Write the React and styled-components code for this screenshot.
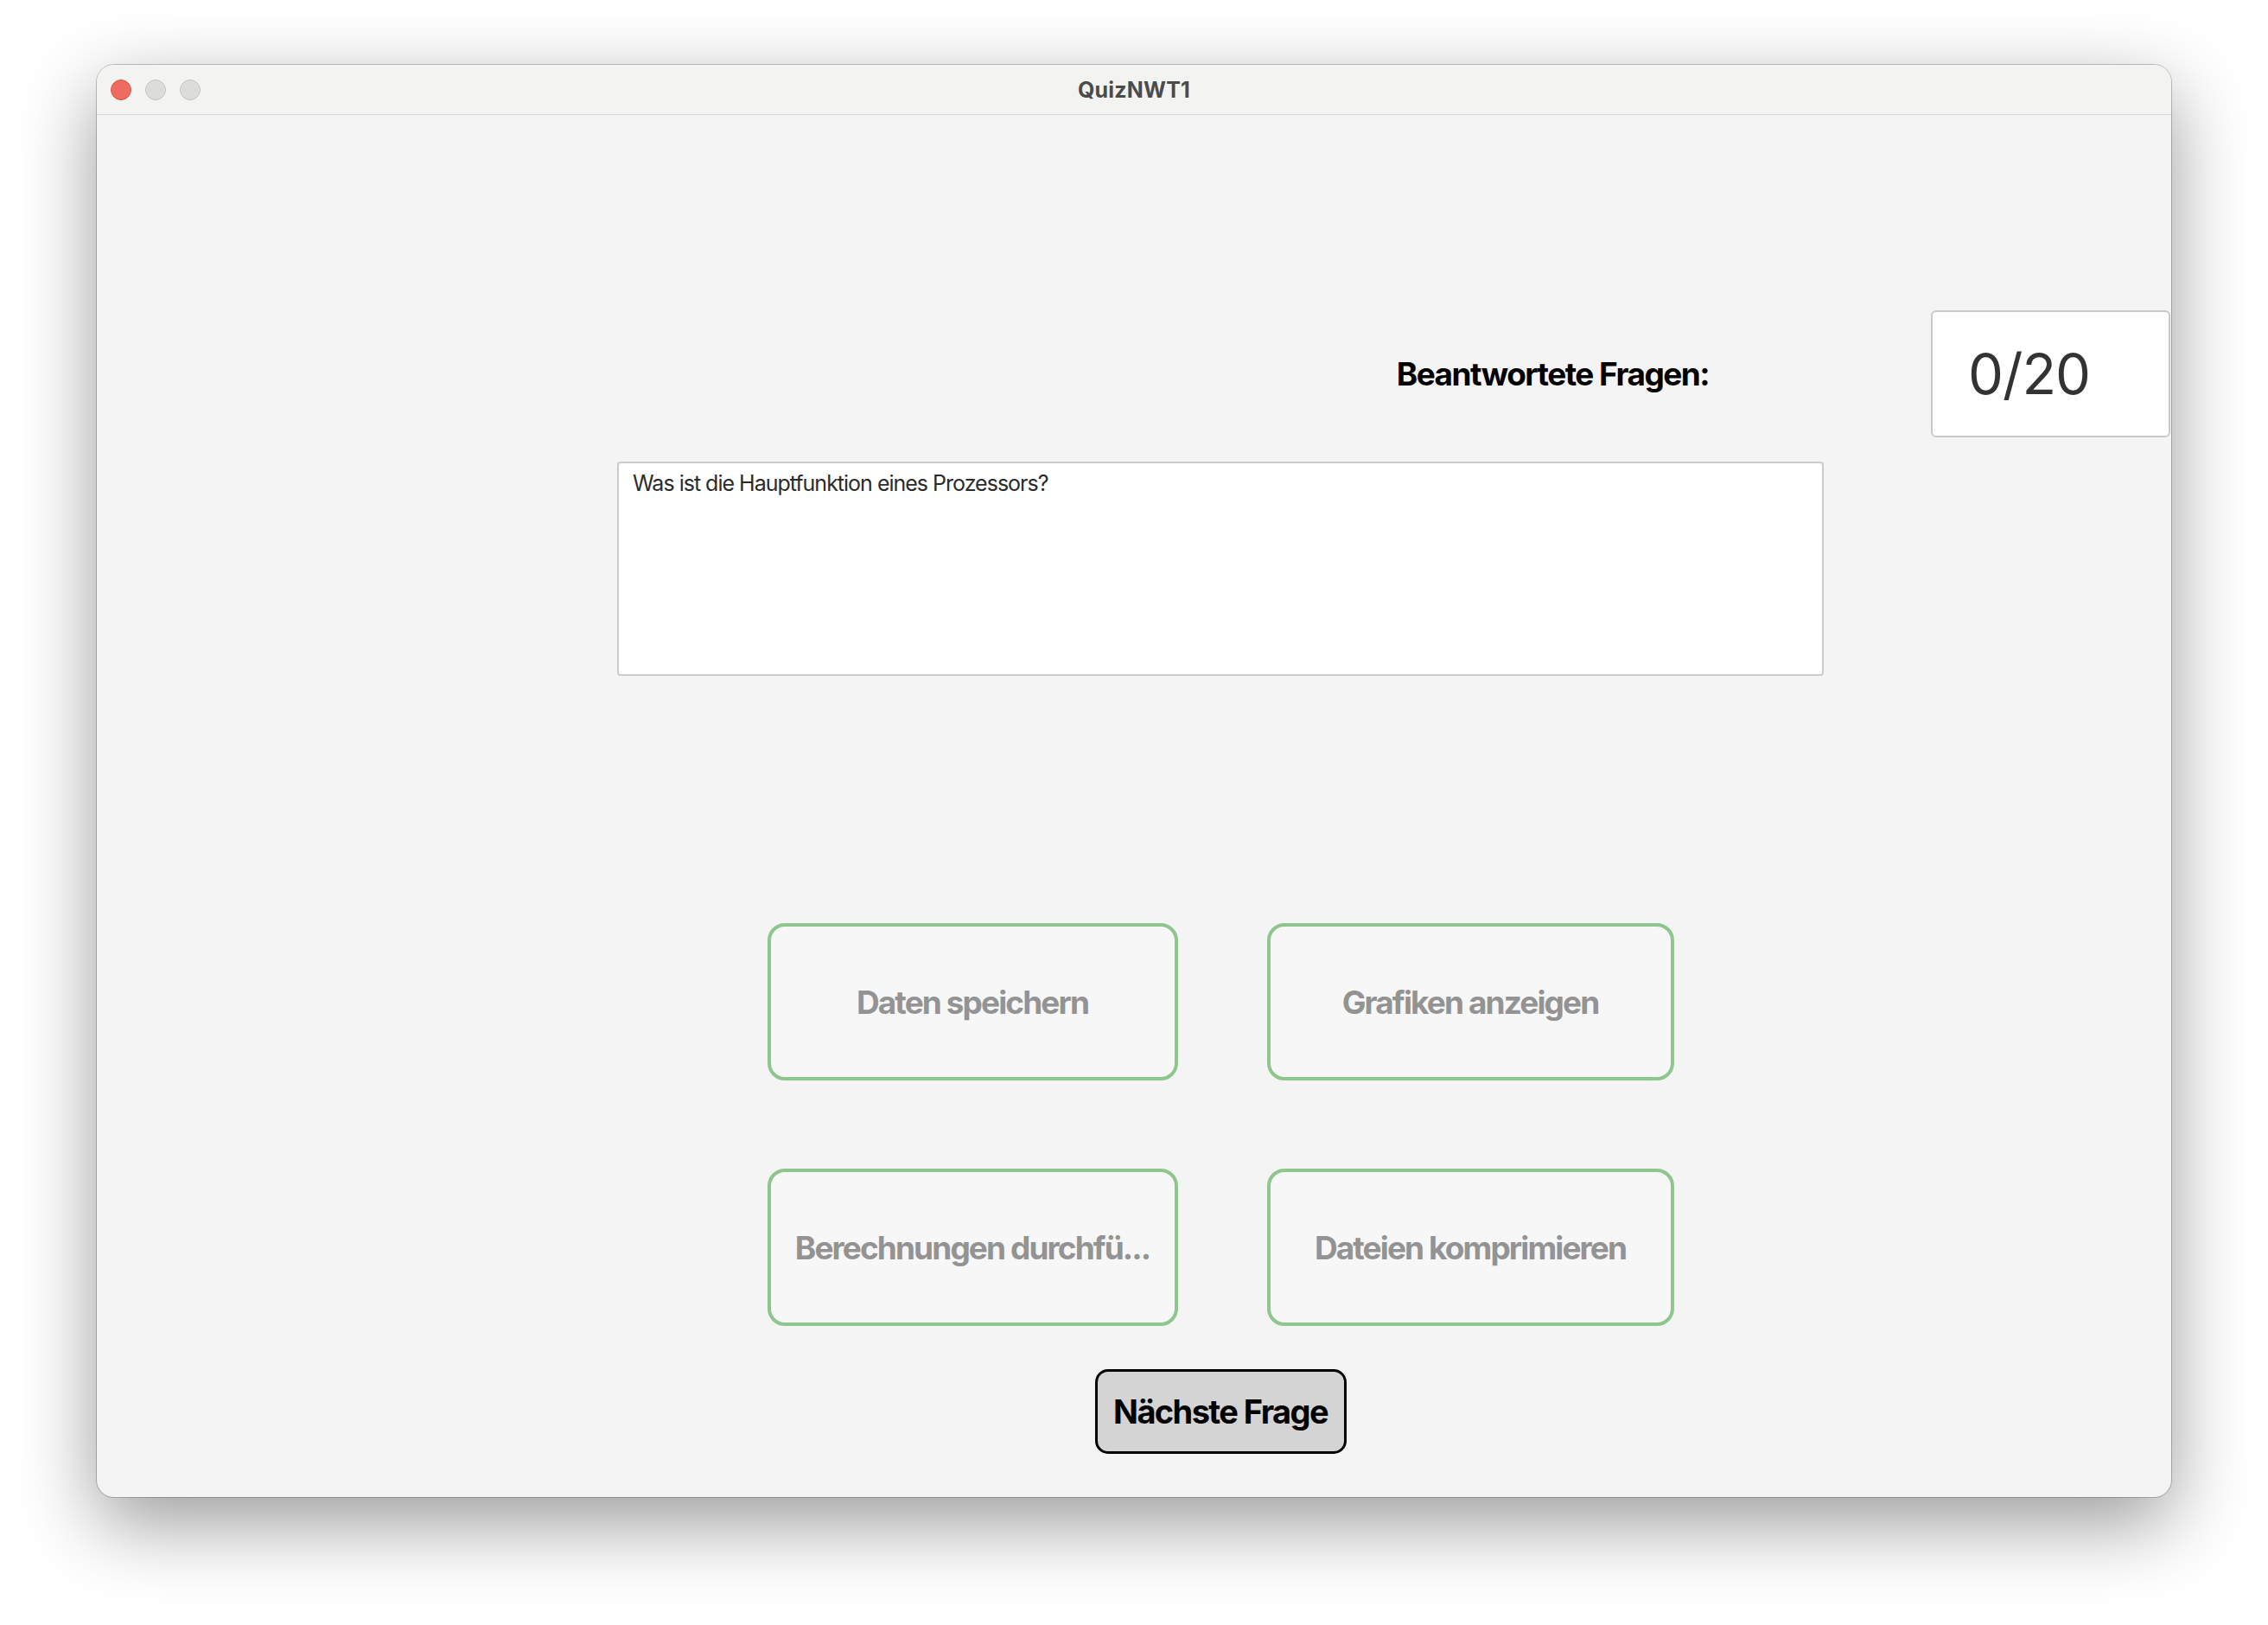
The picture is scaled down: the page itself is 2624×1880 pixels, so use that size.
import React from "react";
import styled, { createGlobalStyle } from "styled-components";

const GlobalStyle = createGlobalStyle`
  html, body {
    margin: 0;
    padding: 0;
    background: #ffffff;
  }
  body {
    font-family: Inter, "Noto Sans", "Liberation Sans", sans-serif;
  }
`;

const answers = [
  "Daten speichern",
  "Grafiken anzeigen",
  "Berechnungen durchfü...",
  "Dateien komprimieren",
];

const App = () => {
  return (
    <>
      <GlobalStyle />
      <Page>
        <Window>
          <TitleBar>
            <Lights>
              <Light $color="#ee6b60" $edge="#d5564b" />
              <Light $color="#dcdcdb" $edge="#c3c3c2" />
              <Light $color="#dcdcdb" $edge="#c3c3c2" />
            </Lights>
            <Title>QuizNWT1</Title>
            <span />
          </TitleBar>

          <Content>
            <HeaderRow>
              <CounterLabel>Beantwortete Fragen:</CounterLabel>
              <CounterBox>0/20</CounterBox>
            </HeaderRow>

            <Main>
              <Question readOnly defaultValue="Was ist die Hauptfunktion eines Prozessors?" />

              <AnswerGrid>
                {answers.map((a) => (
                  <AnswerButton key={a}>{a}</AnswerButton>
                ))}
              </AnswerGrid>

              <NextButton>Nächste Frage</NextButton>
            </Main>
          </Content>
        </Window>
      </Page>
    </>
  );
};

export default App;

/* Styled Components */
const Page = styled.div`
  padding: 75px 0 0 112px;
  min-height: 1880px;
  box-sizing: border-box;
`;

const Window = styled.div`
  width: 2400px;
  height: 1657px;
  border-radius: 20px;
  background: #f4f4f4;
  overflow: hidden;
  display: flex;
  flex-direction: column;
  box-shadow: 0 0 0 1px rgba(0, 0, 0, 0.22), 0 30px 90px rgba(0, 0, 0, 0.4);
`;

const TitleBar = styled.div`
  height: 57px;
  flex-shrink: 0;
  display: grid;
  grid-template-columns: 1fr auto 1fr;
  align-items: center;
  background: #f3f3f2;
  border-bottom: 1px solid #d5d5d4;
`;

const Lights = styled.div`
  display: flex;
  gap: 16px;
  padding-left: 16px;
`;

const Light = styled.span`
  width: 24px;
  height: 24px;
  border-radius: 50%;
  box-sizing: border-box;
  background: ${(p) => p.$color};
  border: 1px solid ${(p) => p.$edge};
`;

const Title = styled.div`
  font-family: Inter, "Liberation Sans", sans-serif;
  font-weight: 700;
  font-size: 25px;
  color: #4b4b4b;
  letter-spacing: 0.2px;
`;

const Content = styled.div`
  flex: 1;
  display: flex;
  flex-direction: column;
`;

const HeaderRow = styled.div`
  display: flex;
  justify-content: flex-end;
  align-items: center;
  gap: 257px;
  padding: 226px 1px 0 0;
`;

const CounterLabel = styled.div`
  font-family: Inter, "Liberation Sans", sans-serif;
  font-weight: 700;
  font-size: 37px;
  letter-spacing: -1.55px;
  color: #000;
`;

const CounterBox = styled.div`
  width: 277px;
  height: 147px;
  box-sizing: border-box;
  display: flex;
  align-items: center;
  padding-left: 41px;
  background: #fff;
  border: 2px solid #c9c9c9;
  border-radius: 6px;
  font-family: Inter, "Liberation Sans", sans-serif;
  font-size: 65px;
  font-weight: 400;
  letter-spacing: -1px;
  color: #333;
`;

const Main = styled.div`
  margin-left: 602px;
  width: 1396px;
  display: flex;
  flex-direction: column;
  align-items: center;
`;

const Question = styled.textarea`
  margin: 28px 0 0;
  width: 1396px;
  height: 248px;
  box-sizing: border-box;
  resize: none;
  outline: none;
  padding: 8px 16px;
  background: #fff;
  border: 2px solid #cbcbcb;
  border-radius: 4px;
  font-family: Inter, "Liberation Sans", sans-serif;
  font-size: 25px;
  line-height: 30px;
  letter-spacing: -1px;
  color: #2b2b2b;
`;

const AnswerGrid = styled.div`
  margin-top: 286px;
  display: grid;
  grid-template-columns: 475px 471px;
  grid-auto-rows: 182px;
  column-gap: 103px;
  row-gap: 102px;
`;

const AnswerButton = styled.button`
  box-sizing: border-box;
  display: flex;
  align-items: center;
  justify-content: center;
  background: #f7f7f7;
  border: 4px solid #8ec68e;
  border-radius: 20px;
  font-family: Inter, "Liberation Sans", sans-serif;
  font-weight: 700;
  font-size: 37px;
  letter-spacing: -1.9px;
  color: #939393;
  white-space: nowrap;
  overflow: hidden;
  cursor: pointer;
`;

const NextButton = styled.button`
  margin-top: 50px;
  width: 291px;
  height: 98px;
  box-sizing: border-box;
  background: #d4d4d4;
  border: 3px solid #000;
  border-radius: 15px;
  font-family: Inter, "Liberation Sans", sans-serif;
  font-weight: 700;
  font-size: 38px;
  letter-spacing: -1.6px;
  color: #000;
  cursor: pointer;
`;
